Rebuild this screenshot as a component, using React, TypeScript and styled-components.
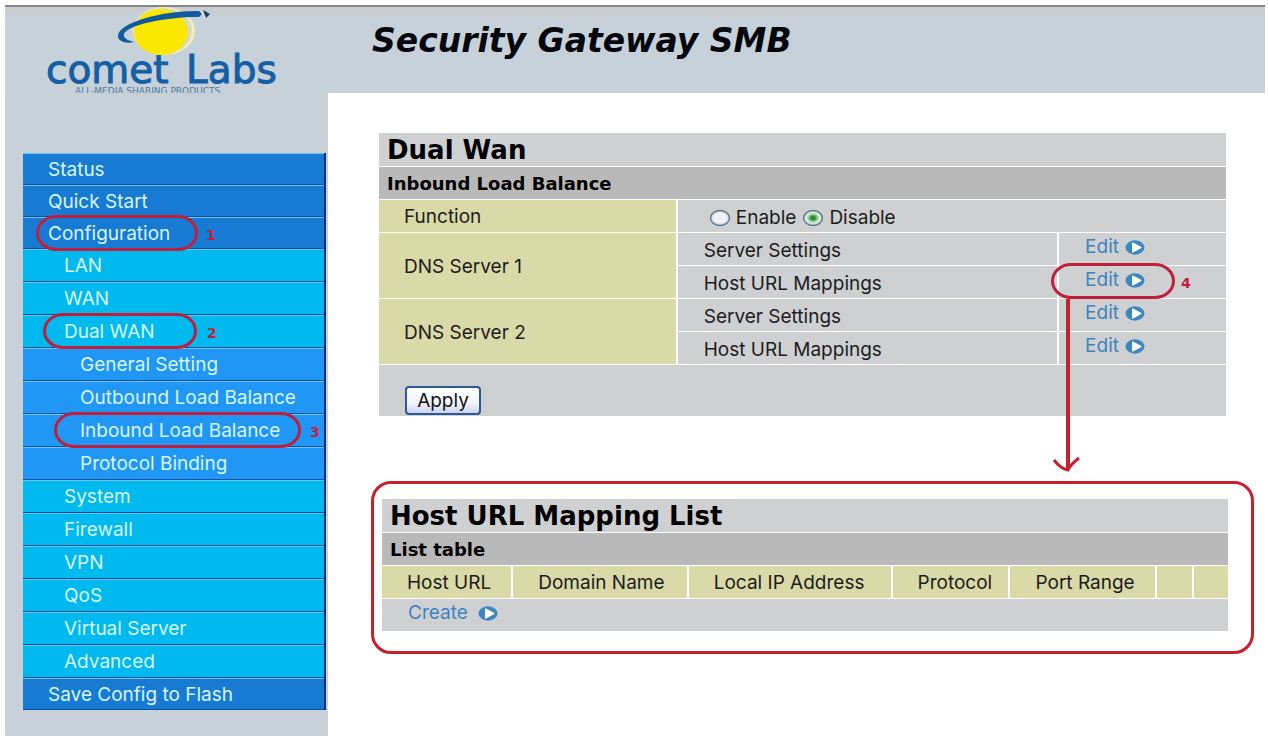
import React from "react";
import styled, { createGlobalStyle } from "styled-components";

const sans = `Inter, "Liberation Sans", Arial, sans-serif`;
const wide = `"DejaVu Sans", Verdana, sans-serif`;

const GlobalStyle = createGlobalStyle`
  *, *::before, *::after { box-sizing: border-box; }
  body {
    margin: 0;
    background: #fff;
    color: #1c1c1c;
    font-family: ${sans};
    font-size: 19px;
    line-height: 22px;
  }
`;

const Page = styled.div`
  padding: 5px 3px 4px 5px;
`;

const Header = styled.header`
  display: flex;
  height: 88px;
  border-top: 2px solid #868789;
  background: linear-gradient(#cbcdcf 0, #c6d1d9 14px);
`;

const Brand = styled.div`
  flex: none;
  width: 323px;
`;

const ProductName = styled.h1`
  margin: 0;
  padding: 16px 0 0 44px;
  color: #05070c;
  font: italic bold 33px/36px ${wide};
`;

const Body = styled.div`
  display: flex;
`;

const Sidebar = styled.aside`
  flex: none;
  width: 323px;
  padding: 60px 2px 26px 18px;
  background: #c8d1d8;
`;

const Menu = styled.ul`
  margin: 0;
  padding: 0;
  list-style: none;
  border-right: 2px solid #0a2f7c;
`;

const levels = [
  { background: "#187bd3", indent: 25, height: 32 },
  { background: "#00b9ee", indent: 41, height: 33 },
  { background: "#2197f5", indent: 57, height: 33 },
];

const MenuItem = styled.li<{ $level: number }>`
  position: relative;
  height: ${(p) => levels[p.$level].height}px;
  padding-left: ${(p) => levels[p.$level].indent}px;
  border-top: 1px solid #6fc3f2;
  border-bottom: 1px solid #0e4fa3;
  background: ${(p) => levels[p.$level].background};
`;

const MenuLink = styled.a`
  display: block;
  color: #d6f6ff;
  line-height: 32px;
  white-space: nowrap;
  text-decoration: none;
`;

const Ring = styled.span<{ $left: number; $width: number }>`
  position: absolute;
  z-index: 1;
  top: -3px;
  left: ${(p) => p.$left}px;
  width: ${(p) => p.$width}px;
  height: 36px;
  border: 3px solid #c01f3c;
  border-radius: 20px / 18px;
  pointer-events: none;
`;

const Step = styled.span<{ $left: number }>`
  position: absolute;
  z-index: 1;
  top: 9px;
  left: ${(p) => p.$left}px;
  color: #c01f3c;
  font: bold 14px/16px ${wide};
`;

const Main = styled.main`
  flex: 1;
  min-width: 0;
`;

const Panel = styled.section`
  margin: 39px 37px 64px 49px;
`;

const FramedPanel = styled.section`
  margin: 0 11px 0 43px;
  padding: 14px 21px 19px 6px;
  border: 3px solid #c8202c;
  border-radius: 20px;
`;

const Table = styled.table`
  width: 100%;
  border-spacing: 2px 1px;
  table-layout: fixed;
`;

const Title = styled.th`
  height: 33px;
  padding: 0 8px;
  background: #cfd0d1;
  color: #000;
  font: bold 26px/32px ${wide};
  text-align: left;
`;

const Subtitle = styled.th`
  height: 32px;
  padding: 2px 8px 0;
  background: #b9b9b9;
  color: #000;
  font: bold 18px/24px ${wide};
  text-align: left;
`;

const Label = styled.th`
  height: 32px;
  padding: 2px 0 0 25px;
  background: #dad9a8;
  font-weight: normal;
  text-align: left;
  white-space: nowrap;
`;

const Cell = styled.td`
  height: 32px;
  padding: 3px 0 0 26px;
  background: #cfd0d2;
`;

const ActionCell = styled(Cell)`
  position: relative;
  padding-top: 0;
  padding-bottom: 4px;
`;

const Options = styled.div`
  display: flex;
  gap: 7px;
  padding-left: 6px;
`;

const Option = styled.label`
  display: flex;
  align-items: center;
  gap: 6px;
`;

const Radio = styled.input`
  appearance: none;
  width: 20px;
  height: 16px;
  margin: 0;
  border: 1px solid #47607c;
  border-radius: 50%;
  background: #f1f3f4;
  box-shadow: inset 0 0 2px #47607c;

  &:checked {
    background: radial-gradient(closest-side, #2a8a35 0 25%, #7cc487 45%, #e6f2e6 75%);
  }
`;

const ActionLink = styled.a<{ $gap: number }>`
  display: inline-flex;
  align-items: center;
  gap: ${(p) => p.$gap}px;
  color: #3f83bd;
  text-decoration: none;
`;

const FooterCell = styled.td`
  height: 51px;
  padding: 20px 26px 0;
  background: #cfd0d2;
`;

const ApplyButton = styled.button`
  display: block;
  width: 76px;
  height: 29px;
  padding: 0;
  border: 2px solid #2a5a94;
  border-radius: 4px;
  background: linear-gradient(#fff, #f3f5fd 60%, #ccd2f2);
  color: #111;
  font: 19px/22px ${sans};
`;

const Arrow = styled.svg`
  position: absolute;
  z-index: 1;
  top: 33px;
  left: -8px;
  pointer-events: none;
`;

const Logo = () => (
  <svg width="323" height="86" viewBox="5 7 323 86" overflow="visible" role="img" aria-label="comet Labs">
    <ellipse cx="164" cy="31" rx="31" ry="24" fill="#f3eeb4" />
    <ellipse cx="163" cy="31" rx="29" ry="23" fill="#d3dbd0" />
    <ellipse cx="161" cy="32" rx="27" ry="23" fill="#fbe800" />
    <path
      d="M199 11 C166 10 118 22 118 36 C118 41 125 44 134 42 C127 40 123 38 124 34 C128 25 164 17 199 17 L202 14 Z"
      fill="#125a9f"
    />
    <path d="M203 10 L210 14 L206 18 Z" fill="#17406f" />
    <path d="M201 11 L205 18" stroke="#e8f2f8" strokeWidth="1" />
    <g fill="#145fa6" stroke="#145fa6" strokeWidth="1" fontFamily="DejaVu Sans, sans-serif" fontSize="39">
      <text x="46" y="83">comet</text>
      <text x="186" y="83">Labs</text>
    </g>
    <text x="75" y="94" fill="#4c7a9d" fontFamily="DejaVu Sans, sans-serif" fontSize="9">
      ALL-MEDIA SHARING PRODUCTS
    </text>
  </svg>
);

const PlayIcon = () => (
  <svg width="20" height="15" viewBox="0 0 20 15" aria-hidden="true">
    <ellipse cx="10" cy="7.5" rx="9.5" ry="7.2" fill="#3b87bf" />
    <path d="M7 3 Q7 2.200 8 2.600 L16 6.800 Q17 7.500 16 8.200 L8 12.400 Q7 12.800 7 12 Z" fill="#fff" />
  </svg>
);

type Item = { text: string; level: number; ring?: [number, number]; step?: [string, number] };

const items: Item[] = [
  { text: "Status", level: 0 },
  { text: "Quick Start", level: 0 },
  { text: "Configuration", level: 0, ring: [13, 162], step: ["1", 183] },
  { text: "LAN", level: 1 },
  { text: "WAN", level: 1 },
  { text: "Dual WAN", level: 1, ring: [20, 154], step: ["2", 184] },
  { text: "General Setting", level: 2 },
  { text: "Outbound Load Balance", level: 2 },
  { text: "Inbound Load Balance", level: 2, ring: [31, 247], step: ["3", 287] },
  { text: "Protocol Binding", level: 2 },
  { text: "System", level: 1 },
  { text: "Firewall", level: 1 },
  { text: "VPN", level: 1 },
  { text: "QoS", level: 1 },
  { text: "Virtual Server", level: 1 },
  { text: "Advanced", level: 1 },
  { text: "Save Config to Flash", level: 0 },
];

const EditLink = () => (
  <ActionLink href="#edit" $gap={6}>
    Edit
    <PlayIcon />
  </ActionLink>
);

export default function App() {
  return (
    <Page>
      <GlobalStyle />
      <Header>
        <Brand>
          <Logo />
        </Brand>
        <ProductName>Security Gateway SMB</ProductName>
      </Header>
      <Body>
        <Sidebar>
          <nav>
            <Menu>
              {items.map((item) => (
                <MenuItem key={item.text} $level={item.level}>
                  <MenuLink href="#menu">{item.text}</MenuLink>
                  {item.ring && <Ring $left={item.ring[0]} $width={item.ring[1]} />}
                  {item.step && <Step $left={item.step[1]}>{item.step[0]}</Step>}
                </MenuItem>
              ))}
            </Menu>
          </nav>
        </Sidebar>
        <Main>
          <Panel>
            <Table>
              <colgroup>
                <col style={{ width: "35.2%" }} />
                <col style={{ width: "45%" }} />
                <col />
              </colgroup>
              <thead>
                <tr>
                  <Title colSpan={3}>Dual Wan</Title>
                </tr>
                <tr>
                  <Subtitle colSpan={3}>Inbound Load Balance</Subtitle>
                </tr>
              </thead>
              <tbody>
                <tr>
                  <Label>Function</Label>
                  <Cell colSpan={2}>
                    <Options>
                      <Option>
                        <Radio type="radio" name="function" />
                        Enable
                      </Option>
                      <Option>
                        <Radio type="radio" name="function" defaultChecked />
                        Disable
                      </Option>
                    </Options>
                  </Cell>
                </tr>
                {[1, 2].map((server) => (
                  <React.Fragment key={server}>
                    <tr>
                      <Label rowSpan={2}>DNS Server {server}</Label>
                      <Cell>Server Settings</Cell>
                      <ActionCell>
                        <EditLink />
                      </ActionCell>
                    </tr>
                    <tr>
                      <Cell>Host URL Mappings</Cell>
                      <ActionCell>
                        <EditLink />
                        {server === 1 && (
                          <>
                            <Ring $left={-8} $width={124} />
                            <Step $left={122}>4</Step>
                            <Arrow width="34" height="176" viewBox="0 0 34 176" aria-hidden="true">
                              <path d="M17 0 V170" stroke="#c8202c" strokeWidth="4" />
                              <path
                                d="M3 161 Q10 170 17 171 Q20 165 28 159"
                                fill="none"
                                stroke="#c8202c"
                                strokeWidth="3"
                              />
                            </Arrow>
                          </>
                        )}
                      </ActionCell>
                    </tr>
                  </React.Fragment>
                ))}
                <tr>
                  <FooterCell colSpan={3}>
                    <ApplyButton type="button">Apply</ApplyButton>
                  </FooterCell>
                </tr>
              </tbody>
            </Table>
          </Panel>
          <FramedPanel>
            <Table>
              <colgroup>
                <col style={{ width: "15.5%" }} />
                <col style={{ width: "20.8%" }} />
                <col style={{ width: "24.2%" }} />
                <col style={{ width: "13.9%" }} />
                <col style={{ width: "17.3%" }} />
                <col style={{ width: "4.2%" }} />
                <col />
              </colgroup>
              <thead>
                <tr>
                  <Title colSpan={7}>Host URL Mapping List</Title>
                </tr>
                <tr>
                  <Subtitle colSpan={7}>List table</Subtitle>
                </tr>
                <tr>
                  <Label>Host URL</Label>
                  <Label>Domain Name</Label>
                  <Label>Local IP Address</Label>
                  <Label>Protocol</Label>
                  <Label>Port Range</Label>
                  <Label />
                  <Label />
                </tr>
              </thead>
              <tbody>
                <tr>
                  <ActionCell colSpan={7}>
                    <ActionLink href="#create" $gap={10}>
                      Create
                      <PlayIcon />
                    </ActionLink>
                  </ActionCell>
                </tr>
              </tbody>
            </Table>
          </FramedPanel>
        </Main>
      </Body>
    </Page>
  );
}
